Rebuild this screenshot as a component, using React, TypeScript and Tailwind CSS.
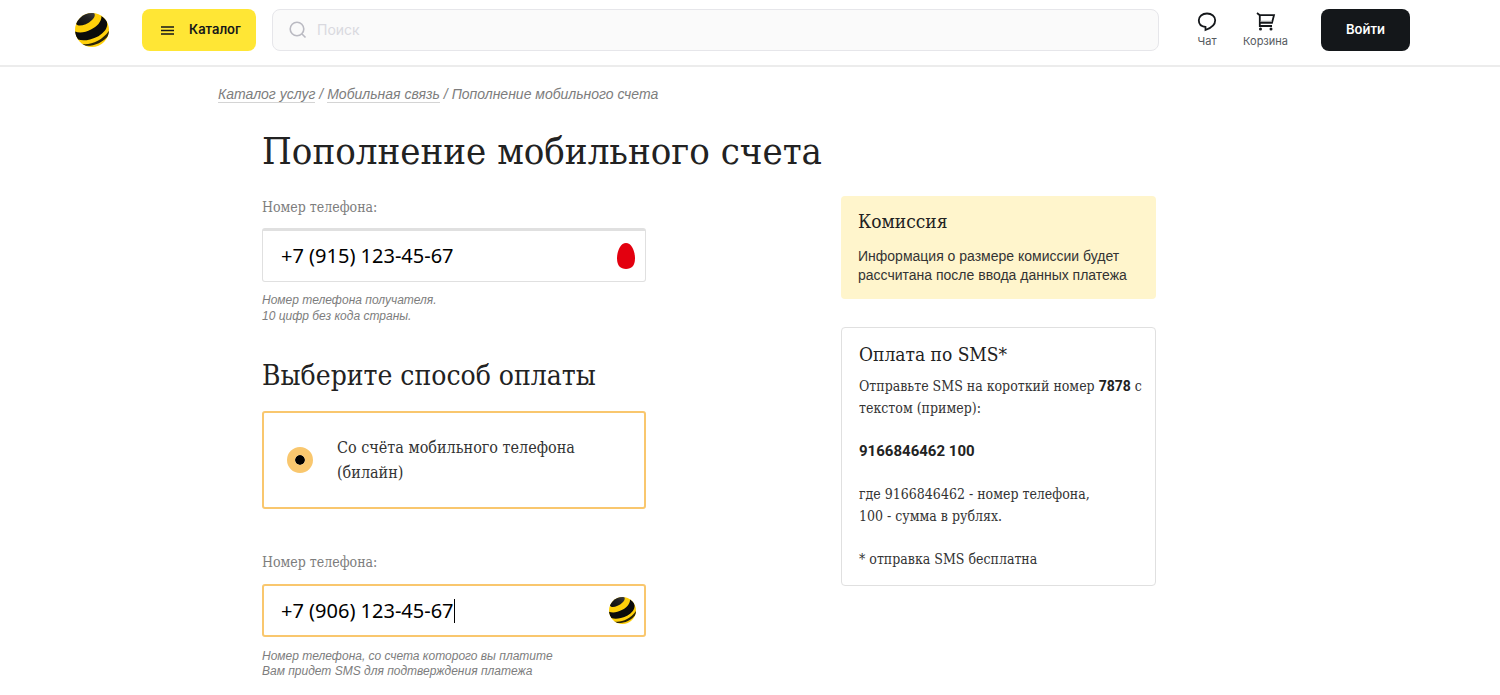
import { useState } from "react";

function Logo({ className, id }: { className: string; id: string }) {
  return (
    <svg viewBox="0 0 34 34" className={className} aria-hidden="true">
      <defs>
        <clipPath id={`${id}-ball`}>
          <circle cx="17" cy="17" r="17" />
        </clipPath>
        <linearGradient id={`${id}-shine`} x1="0" y1="1" x2="1" y2="0">
          <stop offset="0" stopColor="#0b0b0b" />
          <stop offset="0.6" stopColor="#222" />
          <stop offset="1" stopColor="#444" />
        </linearGradient>
      </defs>
      <g clipPath={`url(#${id}-ball)`}>
        <rect width="34" height="34" fill="#ffd00a" />
        <path d="M1 9 C4 3 10 -1 18 -1 C21 1 20 4 17 7 C13 11 7 13 3.500 12.500 C1.500 12 0.500 10.500 1 9 Z" fill={`url(#${id}-shine)`} />
        <path d="M-1 18 C3 20.500 10 20 16 16.500 C22 13.500 26.500 9 26.500 3 L31 6 C33 10 32.500 14 30 17.500 C26.500 22 21 25 15 26.500 C10 27.700 6 27.500 3 26.500 L-1 20 Z" fill="#0b0b0b" />
        <path d="M5 30.500 C14 33 27 28.500 34.500 17 L34.500 21 C28 30.500 17 34 8 32.500 Z" fill="#2a2408" />
      </g>
    </svg>
  );
}

function ChatIcon() {
  return (
    <svg viewBox="0 0 20 20" className="h-5 w-5" fill="none" stroke="#14171a" strokeWidth="1.800" aria-hidden="true">
      <path d="M8.500 15 C4.500 14.600 1.800 12 1.800 8.300 C1.800 4.400 5.200 1.500 10 1.500 C14.800 1.500 18.200 4.400 18.200 8.300 C18.200 12.500 14.500 16 8.500 18 Z" />
    </svg>
  );
}

function CartIcon() {
  return (
    <svg viewBox="0 0 20 20" className="h-5 w-5" fill="none" stroke="#14171a" strokeWidth="1.800" aria-hidden="true">
      <path d="M1 1 L3.800 3.200 V14 H16 M3.800 3.200 H18 L16 10.800 H3.800" />
      <path d="M4.500 9.300 H16" strokeWidth="1" stroke="#8d8f91" />
      <circle cx="4.500" cy="17" r="1.500" fill="#14171a" stroke="none" />
      <circle cx="15" cy="17" r="1.500" fill="#14171a" stroke="none" />
    </svg>
  );
}

function Header() {
  return (
    <header className="flex items-center border-b-2 border-[#ececec] pt-[9px] pr-[90px] pb-[14px] pl-[75px] font-['Inter',sans-serif]">
      <a href="#home" aria-label="На главную">
        <Logo id="top" className="h-[34px] w-[34px]" />
      </a>
      <button className="ml-[33px] flex h-[42px] w-[114px] items-center gap-[15px] rounded-lg bg-[#ffe635] pl-[19px] text-[13px] font-semibold text-[#14171a]">
        <svg viewBox="0 0 13 9" className="h-[9px] w-[13px]" aria-hidden="true">
          <path d="M0 1h13M0 4.500h13M0 8h13" stroke="#14171a" strokeWidth="1.600" />
        </svg>
        Каталог
      </button>
      <label className="ml-4 flex h-[42px] flex-1 items-center gap-[10px] rounded-lg border border-[#e6e6ea] bg-[#fafafa] px-4">
        <svg viewBox="0 0 18 18" className="h-[18px] w-[18px]" fill="none" stroke="#babac2" strokeWidth="1.600" aria-hidden="true">
          <circle cx="8" cy="8" r="6.800" />
          <path d="M13 13l3.500 3.500" />
        </svg>
        <input type="search" aria-label="Поиск" placeholder="Поиск" className="flex-1 bg-transparent text-sm outline-none placeholder:text-[#d9d9df]" />
      </label>
      <nav className="ml-[38px] flex gap-[26px] text-[11px] leading-4 text-[#55595e]">
        <a href="#chat" className="flex flex-col items-center gap-px">
          <ChatIcon />
          Чат
        </a>
        <a href="#cart" className="flex flex-col items-center gap-px">
          <CartIcon />
          Корзина
        </a>
      </nav>
      <button className="ml-[33px] h-[42px] w-[89px] rounded-lg bg-[#14171a] text-[13px] font-semibold text-white">Войти</button>
    </header>
  );
}

export default function App() {
  const [recipient, setRecipient] = useState("+7 (915) 123-45-67");
  const [payer, setPayer] = useState("+7 (906) 123-45-67");

  return (
    <div className="bg-white font-['DejaVu_Serif_Condensed','DejaVu_Serif',serif] text-[#222]">
      <Header />
      <nav aria-label="Навигация" className="mt-[19px] ml-[218px] flex gap-1 font-['Liberation_Sans',Arial,sans-serif] text-sm leading-4 text-[#7d7d7d] italic">
        <a href="#services" className="border-b border-[#d4d4d4]">Каталог услуг</a>
        <span>/</span>
        <a href="#mobile" className="border-b border-[#d4d4d4]">Мобильная связь</a>
        <span>/</span>
        <span>Пополнение мобильного счета</span>
      </nav>

      <main className="pr-[344px] pl-[262px]">
        <h1 className="mt-6 text-[38px] leading-[48px]">Пополнение мобильного счета</h1>
        <div className="mt-[21px] flex items-start justify-between">
          <form className="w-[384px]">
            <label htmlFor="recipient" className="block text-sm leading-[22px] text-[#7d7d7d]">Номер телефона:</label>
            <div className="mt-[10px] flex h-[54px] items-center justify-between rounded-[3px] border border-t-[3px] border-[#e0e0e0] pr-[10px] pl-[18px]">
              <input
                id="recipient"
                type="tel"
                value={recipient}
                onChange={(e) => setRecipient(e.target.value)}
                className="w-[240px] font-['Noto_Sans',sans-serif] text-xl text-black outline-none"
              />
              <svg viewBox="0 0 18 26" className="h-[26px] w-[18px]" aria-hidden="true">
                <path d="M9 0 C14.500 0 18 8 18 15.500 C18 22.500 14.500 26 9 26 C3.500 26 0 22.500 0 15.500 C0 8 3.500 0 9 0 Z" fill="#e3000f" />
              </svg>
            </div>
            <p className="mt-[10px] font-['Liberation_Sans',Arial,sans-serif] text-xs leading-4 text-[#7d7d7d] italic">
              Номер телефона получателя.
              <br />
              10 цифр без кода страны.
            </p>

            <h2 className="mt-8 text-[28px] leading-[40px]">Выберите способ оплаты</h2>
            <label className="mt-[15px] flex h-[98px] items-center gap-6 rounded-[3px] border-2 border-[#f9c76e] pl-[23px] text-base leading-[25px] text-[#333]">
              <input
                type="radio"
                name="method"
                defaultChecked
                className="h-[26px] w-[26px] shrink-0 appearance-none rounded-full border-8 border-[#f9c76e] bg-black bg-clip-padding"
              />
              <span>
                Со счёта мобильного телефона
                <br />
                (билайн)
              </span>
            </label>

            <label htmlFor="payer" className="mt-[42px] block text-sm leading-[22px] text-[#7d7d7d]">Номер телефона:</label>
            <div className="mt-[11px] flex h-[53px] items-center rounded-[3px] border-2 border-[#f9c76e] pr-[8px] pl-[17px]">
              <input
                id="payer"
                type="tel"
                value={payer}
                onChange={(e) => setPayer(e.target.value)}
                className="field-sizing-content font-['Noto_Sans',sans-serif] text-xl text-black caret-transparent outline-none"
              />
              <span className="h-6 w-px bg-black" />
              <Logo id="field" className="ml-auto h-[27px] w-[27px]" />
            </div>
            <p className="mt-3 font-['Liberation_Sans',Arial,sans-serif] text-xs leading-[15px] text-[#7d7d7d] italic">
              Номер телефона, со счета которого вы платите
              <br />
              Вам придет SMS для подтверждения платежа
            </p>
          </form>

          <aside className="w-[315px]">
            <section className="rounded bg-[#fff5cc] px-[17px] pt-[11px] pb-[14px]">
              <h3 className="text-[19px] leading-[28px]">Комиссия</h3>
              <p className="mt-3 font-['Liberation_Sans',Arial,sans-serif] text-sm leading-[19px] text-[#333]">
                Информация о размере комиссии будет рассчитана после ввода данных платежа
              </p>
            </section>
            <section className="mt-7 rounded border border-[#e0e0e0] pt-3 pr-2 pb-[15px] pl-[17px] text-sm leading-[22px] text-[#333]">
              <h3 className="text-[19px] leading-[28px] text-[#222]">Оплата по SMS*</h3>
              <p className="mt-[7px]">
                Отправьте SMS на короткий номер <b className="font-['Roboto',sans-serif] text-[#222]">7878</b> с текстом (пример):
              </p>
              <p className="mt-[21px] font-['Roboto',sans-serif] text-[15px] font-bold text-[#222]">9166846462 100</p>
              <p className="mt-[21px]">
                где 9166846462 - номер телефона,
                <br />
                100 - сумма в рублях.
              </p>
              <p className="mt-[21px]">* отправка SMS бесплатна</p>
            </section>
          </aside>
        </div>
      </main>
    </div>
  );
}
